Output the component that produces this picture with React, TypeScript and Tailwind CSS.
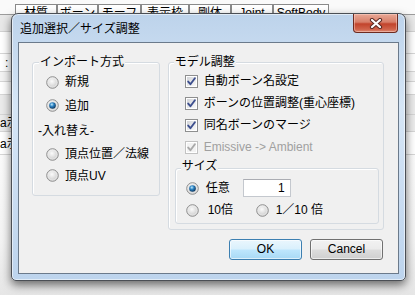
import React from "react";

const tabs = [
  { label: "材質", w: "w-[42px]" },
  { label: "ボーン", w: "w-[41px]" },
  { label: "モーフ", w: "w-[43px]" },
  { label: "表示枠", w: "w-[48px]" },
  { label: "剛体", w: "w-[42px]" },
  { label: "Joint", w: "w-[42px]" },
  { label: "SoftBody", w: "w-[56px]" },
];

const Radio = ({ checked }: { checked?: boolean }) => (
  <svg width="13" height="13" viewBox="0 0 13 13" className="shrink-0">
    <defs>
      <radialGradient id="rb" cx="45%" cy="40%" r="60%">
        <stop offset="0%" stopColor="#fbfbfb" />
        <stop offset="100%" stopColor="#c9c9c9" />
      </radialGradient>
      <radialGradient id="rd" cx="40%" cy="35%" r="65%">
        <stop offset="0%" stopColor="#c4ecfc" />
        <stop offset="45%" stopColor="#2e84c4" />
        <stop offset="100%" stopColor="#0c3760" />
      </radialGradient>
    </defs>
    <circle cx="6.5" cy="6.5" r="5.8" fill="url(#rb)" stroke="#8f8f8f" strokeWidth="1" />
    <circle cx="6.5" cy="6.5" r="4.6" fill="none" stroke="#ffffff" strokeOpacity="0.5" strokeWidth="0.8" />
    {checked && <circle cx="6.5" cy="6.5" r="3.3" fill="url(#rd)" />}
  </svg>
);

const Check = ({ disabled }: { disabled?: boolean }) => (
  <svg width="13" height="13" viewBox="0 0 13 13" className="shrink-0">
    <defs>
      <linearGradient id="cb" x1="0" y1="0" x2="1" y2="1">
        <stop offset="0%" stopColor="#d2d4d8" />
        <stop offset="100%" stopColor="#fafafa" />
      </linearGradient>
    </defs>
    <rect x="0.5" y="0.5" width="12" height="12" fill="#ffffff" stroke={disabled ? "#c2c2c2" : "#8e8f8f"} />
    <rect x="2" y="2" width="9" height="9" fill={disabled ? "#f2f2f2" : "url(#cb)"} />
    <path
      d="M3.2 6.6 L5.4 9.2 L9.9 3.2"
      fill="none"
      stroke={disabled ? "#a9a9a9" : "#3d4f8e"}
      strokeWidth="1.9"
      strokeLinecap="round"
      strokeLinejoin="round"
    />
  </svg>
);

const CloseX = () => (
  <svg width="14" height="11" viewBox="0 0 14 11">
    <path d="M3 2 L11 9 M11 2 L3 9" stroke="#5a2a24" strokeWidth="4.2" strokeLinecap="round" />
    <path d="M3 2 L11 9 M11 2 L3 9" stroke="#ffffff" strokeWidth="2.2" strokeLinecap="round" />
  </svg>
);

export default function App() {
  return (
    <div className="relative w-[415px] h-[295px] overflow-hidden bg-[#f2f2f2] font-['Liberation_Sans','Noto_Sans_CJK_JP',sans-serif] text-[12px] leading-[14px] text-black">
      {/* application behind the dialog */}
      <div className="flex flex-col h-full">
        <div className="h-[15px] bg-[#fafafa] border-b border-[#9c9c9c] flex items-end pl-[15px]">
          {tabs.map((t) => (
            <div
              key={t.label}
              className={`${t.w} h-[10px] border border-b-0 border-[#8a8a8a] bg-white text-center whitespace-nowrap overflow-visible pt-[1px]`}
            >
              {t.label}
            </div>
          ))}
        </div>
        <div className="h-[17px] bg-[#e8e8e8] border-b border-[#d2d2d2]" />
        <div className="h-[22px] bg-white border-b border-[#d6d6d6]" />
        <div className="h-[18px] bg-white border-b border-[#d6d6d6] pl-[5px] pt-[2px]">:</div>
        <div className="h-[10px] bg-[#f4f4f4] border-b border-[#d6d6d6]" />
        <div className="h-[13px] bg-white border-b border-[#d6d6d6]" />
        <div className="h-[20px] bg-[#ebebeb] border-b border-[#d6d6d6]" />
        <div className="h-[17px] bg-[#ececec] border-b border-[#d6d6d6] pt-[1px] whitespace-nowrap">a示</div>
        <div className="h-[23px] bg-white border-b border-[#d6d6d6] pt-[5px] whitespace-nowrap">a示</div>
        <div className="flex-1 bg-[linear-gradient(to_bottom,#fbfbfb,#f4f4f4_60%,#e6e6e6)]" />
      </div>

      {/* dialog window */}
      <div className="absolute left-[11px] top-[13px] w-[395px] h-[268px] rounded-t-[7px] rounded-b-[5px] border border-[#4b4f55] bg-[linear-gradient(180deg,#bdd3eb_0%,#d6e6f6_35%,#c9dcf1_70%,#bdd4ed_100%)] shadow-[inset_0_0_0_1px_rgba(255,255,255,0.55),0_4px_10px_rgba(0,0,0,0.55)] flex flex-col">
        {/* title bar */}
        <div className="h-[28px] flex items-start justify-between pl-[8px] pr-[7px]">
          <div className="pt-[8px] text-[12px] leading-[14px] text-black">追加選択／サイズ調整</div>
          <div className="w-[45px] h-[19px] rounded-b-[4px] border border-t-0 border-[#6d2a20] bg-[linear-gradient(to_bottom,#e9a896_0%,#d77f6a_45%,#c2442c_55%,#d0634b_85%,#dc8a74_100%)] shadow-[inset_0_0_0_1px_rgba(255,220,210,0.45)] flex items-center justify-center">
            <CloseX />
          </div>
        </div>

        {/* client area */}
        <div className="mx-[6px] mb-[6px] flex-1 border border-[#6b7a8b] bg-[#f0f0f0] flex flex-col pl-[13px] pr-[14px] pt-[19px]">
          <div className="flex items-start gap-[8px]">
            {/* import mode */}
            <div className="relative w-[128px] h-[134px] rounded-[3px] border border-[#d5dbe1] shadow-[inset_1px_1px_0_#ffffff] flex flex-col pl-[13px] pt-[8px]">
              <span className="absolute -top-[8px] left-[6px] px-[1px] bg-[#f0f0f0]">インポート方式</span>
              <label className="h-[22px] flex items-center gap-[6px]">
                <Radio />
                <span>新規</span>
              </label>
              <label className="h-[23px] mt-[1px] flex items-center gap-[6px]">
                <Radio checked />
                <span>追加</span>
              </label>
              <div className="h-[22px] mt-[3px] -ml-[8px] flex items-center">-入れ替え-</div>
              <label className="h-[22px] mt-[1px] flex items-center gap-[6px]">
                <Radio />
                <span>頂点位置／法線</span>
              </label>
              <label className="h-[21px] flex items-center gap-[6px]">
                <Radio />
                <span>頂点UV</span>
              </label>
            </div>

            {/* model adjust */}
            <div className="relative w-[217px] h-[168px] rounded-[3px] border border-[#d5dbe1] shadow-[inset_1px_1px_0_#ffffff] flex flex-col pt-[7px]">
              <span className="absolute -top-[8px] left-[5px] px-[1px] bg-[#f0f0f0]">モデル調整</span>
              <div className="pl-[16px] flex flex-col">
                <label className="h-[22px] flex items-center gap-[6px]">
                  <Check />
                  <span>自動ボーン名設定</span>
                </label>
                <label className="h-[22px] flex items-center gap-[6px]">
                  <Check />
                  <span>ボーンの位置調整(重心座標)</span>
                </label>
                <label className="h-[22px] flex items-center gap-[6px]">
                  <Check />
                  <span>同名ボーンのマージ</span>
                </label>
                <label className="h-[22px] flex items-center gap-[6px] text-[#a0a0a0]">
                  <Check disabled />
                  <span>Emissive -&gt; Ambient</span>
                </label>
              </div>

              {/* size */}
              <div className="relative ml-[6px] mt-[10px] w-[204px] h-[56px] rounded-[3px] border border-[#d5dbe1] shadow-[inset_1px_1px_0_#ffffff] flex flex-col pl-[10px] pt-[8px]">
                <span className="absolute -top-[10px] left-[5px] px-[1px] bg-[#f0f0f0]">サイズ</span>
                <div className="h-[22px] flex items-center">
                  <Radio checked />
                  <span className="ml-[7px] w-[37px]">任意</span>
                  <div className="w-[48px] h-[18px] bg-white border border-[#c4c8ce] border-t-[#abadb3] text-right pr-[5px] leading-[16px]">1</div>
                </div>
                <div className="h-[22px] flex items-center">
                  <Radio />
                  <span className="ml-[9px] w-[48px]">10倍</span>
                  <Radio />
                  <span className="ml-[7px]">1／10 倍</span>
                </div>
              </div>
            </div>
          </div>

          {/* buttons */}
          <div className="mt-[9px] flex justify-end gap-[8px] pr-[1px]">
            <button className="w-[73px] h-[21px] rounded-[3px] border border-[#3c7fb1] bg-[linear-gradient(to_bottom,#eaf6fd_0%,#d9f0fc_48%,#bee6fd_52%,#a7d9f5_100%)] shadow-[inset_0_0_0_1px_rgba(255,255,255,0.6)] leading-[19px] text-center">
              OK
            </button>
            <button className="w-[73px] h-[21px] rounded-[3px] border border-[#707070] bg-[linear-gradient(to_bottom,#f2f2f2_0%,#ebebeb_48%,#dddddd_52%,#cfcfcf_100%)] shadow-[inset_0_0_0_1px_rgba(255,255,255,0.6)] leading-[19px] text-center">
              Cancel
            </button>
          </div>
        </div>
      </div>
    </div>
  );
}
